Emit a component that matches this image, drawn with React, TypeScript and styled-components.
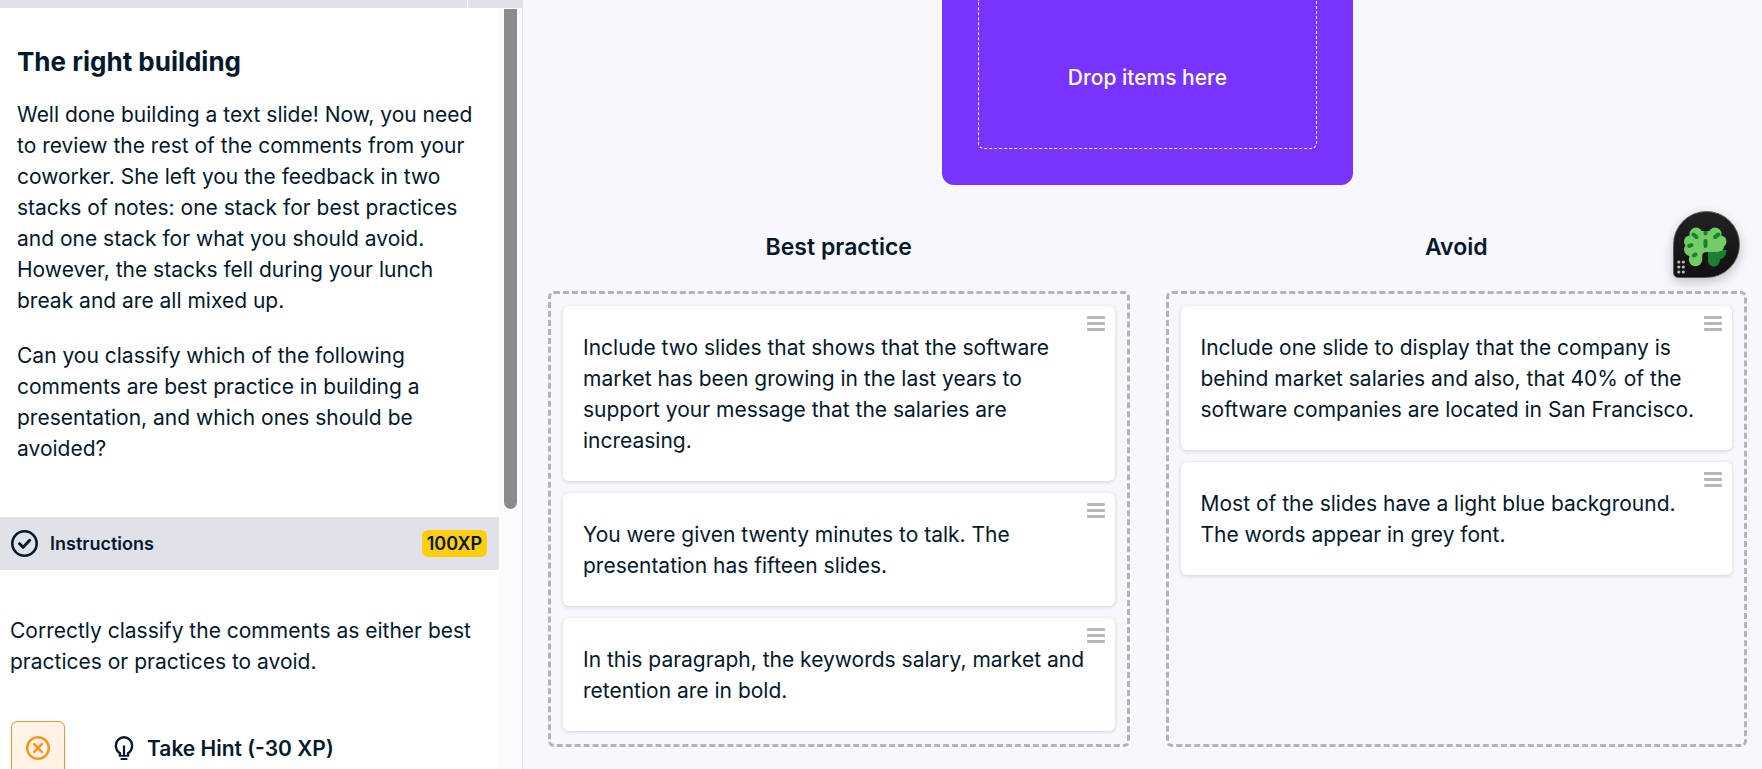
import React from "react";
import styled, { createGlobalStyle } from "styled-components";

const GlobalStyle = createGlobalStyle`
  * { box-sizing: border-box; }
  body {
    margin: 0;
    background: #f7f7fc;
    color: #05192d;
    font-family: Inter, "Open Sans", sans-serif;
    font-size: 21px;
    line-height: 31px;
  }
  h1, h2, p { margin: 0; }
  button { font: inherit; color: inherit; cursor: pointer; }
`;

const Page = styled.div`
  display: flex;
  height: 100vh;
  overflow: hidden;
`;

const Sidebar = styled.aside`
  flex: 0 0 523px;
  display: flex;
  flex-direction: column;
  background: #ffffff;
  border-right: 1px solid #e1e1ea;
`;

const TopStrip = styled.div`
  flex: 0 0 8px;
  display: flex;
  gap: 1px;
`;

const StripPart = styled.div<{ $grow?: boolean }>`
  flex: ${(p) => (p.$grow ? "1" : "0 0 54px")};
  background: #e1e1ea;
`;

const ScrollArea = styled.div`
  flex: 1;
  min-height: 0;
  display: flex;
`;

const ScrollContent = styled.div`
  flex: 1;
  min-width: 0;
  overflow: hidden;
`;

const ScrollTrack = styled.div`
  flex: 0 0 23px;
  padding: 1px 5px 0;
  background: #fcfcfc;
`;

const ScrollThumb = styled.div`
  height: 500px;
  border-radius: 0 0 7px 7px;
  background: #8b8b8b;
`;

const Intro = styled.section`
  display: flex;
  flex-direction: column;
  gap: 24px;
  padding: 37px 17px 53px;
`;

const Title = styled.h1`
  margin-bottom: -4px;
  font-size: 26px;
  line-height: 34px;
  font-weight: 700;
`;

const InstructionsBar = styled.header`
  display: flex;
  align-items: center;
  gap: 12px;
  height: 53px;
  padding: 0 12px 0 11px;
  background: #e1e1ea;
`;

const BarTitle = styled.h2`
  flex: 1;
  font-size: 18px;
  line-height: 27px;
  font-weight: 600;
`;

const XpBadge = styled.span`
  padding: 0 5px;
  border-radius: 6px;
  background: #fcce0d;
  font-size: 18px;
  line-height: 27px;
  font-weight: 600;
`;

const Task = styled.section`
  padding: 45px 10px;
`;

const Actions = styled.div`
  display: flex;
  gap: 37px;
  padding: 44px 1px 0;
`;

const ReportButton = styled.button`
  display: grid;
  place-items: center;
  width: 54px;
  height: 54px;
  padding: 0;
  border: 1px solid #f0952f;
  border-radius: 6px;
  background: #fff3e6;
`;

const HintButton = styled.button`
  display: flex;
  align-items: center;
  gap: 13px;
  height: 54px;
  padding: 0 12px;
  border: 0;
  background: transparent;
  font-weight: 600;
`;

const Main = styled.main`
  flex: 1;
  min-width: 0;
  display: flex;
  flex-direction: column;
  padding: 0 15px 22px 25px;
`;

const Pool = styled.section`
  align-self: center;
  width: 411px;
  padding: 0 36px 36px;
  border-radius: 0 0 12px 12px;
  background: #7933ff;
`;

const PoolDrop = styled.div`
  padding: 62px 0 55px;
  border: 1px dashed #ffffff;
  border-top: 0;
  border-radius: 0 0 6px 6px;
  color: #ffffff;
  text-align: center;
  font-weight: 500;
`;

const Columns = styled.div`
  flex: 1;
  display: grid;
  grid-template-columns: 1fr 1fr;
  gap: 36px;
  padding-top: 47px;
`;

const Column = styled.section`
  display: flex;
  flex-direction: column;
  gap: 28px;
`;

const ColumnTitle = styled.h2`
  font-size: 23px;
  line-height: 31px;
  font-weight: 600;
  text-align: center;
`;

const DropZone = styled.div`
  flex: 1;
  display: flex;
  flex-direction: column;
  gap: 12px;
  padding: 12px;
  border: 3px dashed #b2b4bc;
  border-radius: 6px;
`;

const Card = styled.article`
  position: relative;
  padding: 26px 30px 25px 20px;
  border-radius: 6px;
  background: #ffffff;
  box-shadow: 0 1px 4px rgba(5, 25, 45, 0.16);
  cursor: grab;
`;

const Handle = styled.svg`
  position: absolute;
  top: 10px;
  right: 10px;
`;

const Assistant = styled.button`
  position: fixed;
  top: 211px;
  right: 22px;
  width: 67px;
  height: 67px;
  padding: 0;
  border: 1px solid #55575a;
  border-radius: 34px 34px 34px 5px;
  background: linear-gradient(#222222, #111111);
  box-shadow: 0 4px 12px rgba(0, 0, 0, 0.22);
`;

const CheckIcon = () => (
  <svg width="27" height="27" viewBox="0 0 27 27" fill="none" stroke="#05192d" aria-hidden="true">
    <circle cx="13.5" cy="13.5" r="12.2" strokeWidth="2.6" />
    <path d="M8.5 13.7l3.6 3.6 6.6-7" strokeWidth="3" strokeLinecap="round" strokeLinejoin="round" />
  </svg>
);

const CrossIcon = () => (
  <svg width="24" height="24" viewBox="0 0 24 24" fill="none" stroke="#ff931e" aria-hidden="true">
    <circle cx="12" cy="12" r="10.8" strokeWidth="2.4" />
    <path d="M8.2 8.2l7.6 7.6M15.8 8.2l-7.6 7.6" strokeWidth="2.5" strokeLinecap="round" />
  </svg>
);

const BulbIcon = () => (
  <svg width="20" height="24" viewBox="0 0 20 24" fill="none" stroke="#05192d" aria-hidden="true">
    <path d="M6 19.600V17.300C3 15.400 1.900 12.800 1.900 9.600A8.100 8.400 0 0 1 18.100 9.600C18.100 12.800 17 15.400 14 17.300V19.600" strokeWidth="2.400" strokeLinejoin="round" />
    <path d="M10 10.400V19" strokeWidth="2.200" strokeLinecap="round" />
    <path d="M5.500 19.800H14.500" strokeWidth="1.800" strokeLinecap="round" />
    <path d="M7.400 22.900H12.600" strokeWidth="2" strokeLinecap="round" />
  </svg>
);

const CloverIcon = () => (
  <svg width="65" height="65" viewBox="0 0 65 65" aria-hidden="true">
    <path d="M34 38H52.500C52.500 43 50 46.500 46 47C46 51.500 43.500 54.500 40 54.500C36.500 54.500 34 52 34 48.500z" fill="#1c8030" />
    <g fill="#73cd67">
      <circle cx="22" cy="22" r="6.500" />
      <circle cx="41" cy="22" r="6.500" />
      <circle cx="16" cy="29.500" r="6" />
      <circle cx="46.500" cy="29.500" r="6" />
      <circle cx="16.500" cy="37.500" r="6.500" />
      <circle cx="21.500" cy="47.500" r="6.700" />
      <path d="M22 19H41L50 33C50.500 38 47 40 42 40H33C30 40 28.200 41 28.200 44V48L15 44V24z" />
    </g>
    <path d="M28.300 14H34.700L33.600 19H29.400z" fill="#1b1b1b" />
    <path d="M29.500 19h4v2.500a2 2 0 0 1-4 0zM29.500 29a2 2 0 0 1 4 0v5a2 2 0 0 1-4 0z" fill="#1c8030" />
    <g stroke="#1c8030" strokeWidth="4" strokeLinecap="round">
      <path d="M19.500 22.500l3 2.500M44.500 22.500l-3.500 2.500M15 34l2.500-.800M19.800 43.500l1.700-1" />
    </g>
    <g fill="#b9b9b9">
      {[50, 55, 60].map((y) => (
        <React.Fragment key={y}>
          <circle cx="4.800" cy={y} r="1.600" />
          <circle cx="9.300" cy={y} r="1.600" />
        </React.Fragment>
      ))}
    </g>
  </svg>
);

const best = [
  "Include two slides that shows that the software market has been growing in the last years to support your message that the salaries are increasing.",
  "You were given twenty minutes to talk. The presentation has fifteen slides.",
  "In this paragraph, the keywords salary, market and retention are in bold.",
];

const avoid = [
  "Include one slide to display that the company is behind market salaries and also, that 40% of the software companies are located in San Francisco.",
  "Most of the slides have a light blue background. The words appear in grey font.",
];

const Stack = ({ title, items }: { title: string; items: string[] }) => (
  <Column>
    <ColumnTitle>{title}</ColumnTitle>
    <DropZone>
      {items.map((text) => (
        <Card key={text} draggable>
          <p>{text}</p>
          <Handle width="18" height="15" viewBox="0 0 18 15" fill="#b4b8bc" aria-hidden="true">
            <rect width="18" height="3" rx="1" />
            <rect y="6" width="18" height="3" rx="1" />
            <rect y="12" width="18" height="3" rx="1" />
          </Handle>
        </Card>
      ))}
    </DropZone>
  </Column>
);

export default function App() {
  return (
    <Page>
      <GlobalStyle />
      <Sidebar>
        <TopStrip>
          <StripPart $grow />
          <StripPart />
        </TopStrip>
        <ScrollArea>
          <ScrollContent>
            <Intro>
              <Title>The right building</Title>
              <p>
                Well done building a text slide! Now, you need to review the rest of the comments from your
                coworker. She left you the feedback in two stacks of notes: one stack for best practices and one
                stack for what you should avoid. However, the stacks fell during your lunch break and are all
                mixed up.
              </p>
              <p>
                Can you classify which of the following comments are best practice in building a presentation,
                and which ones should be avoided?
              </p>
            </Intro>
            <InstructionsBar>
              <CheckIcon />
              <BarTitle>Instructions</BarTitle>
              <XpBadge>100XP</XpBadge>
            </InstructionsBar>
            <Task>
              <p>Correctly classify the comments as either best practices or practices to avoid.</p>
              <Actions>
                <ReportButton aria-label="Report an issue">
                  <CrossIcon />
                </ReportButton>
                <HintButton>
                  <BulbIcon />
                  Take Hint (-30 XP)
                </HintButton>
              </Actions>
            </Task>
          </ScrollContent>
          <ScrollTrack>
            <ScrollThumb />
          </ScrollTrack>
        </ScrollArea>
      </Sidebar>
      <Main>
        <Pool>
          <PoolDrop>Drop items here</PoolDrop>
        </Pool>
        <Columns>
          <Stack title="Best practice" items={best} />
          <Stack title="Avoid" items={avoid} />
        </Columns>
      </Main>
      <Assistant aria-label="Open assistant">
        <CloverIcon />
      </Assistant>
    </Page>
  );
}
